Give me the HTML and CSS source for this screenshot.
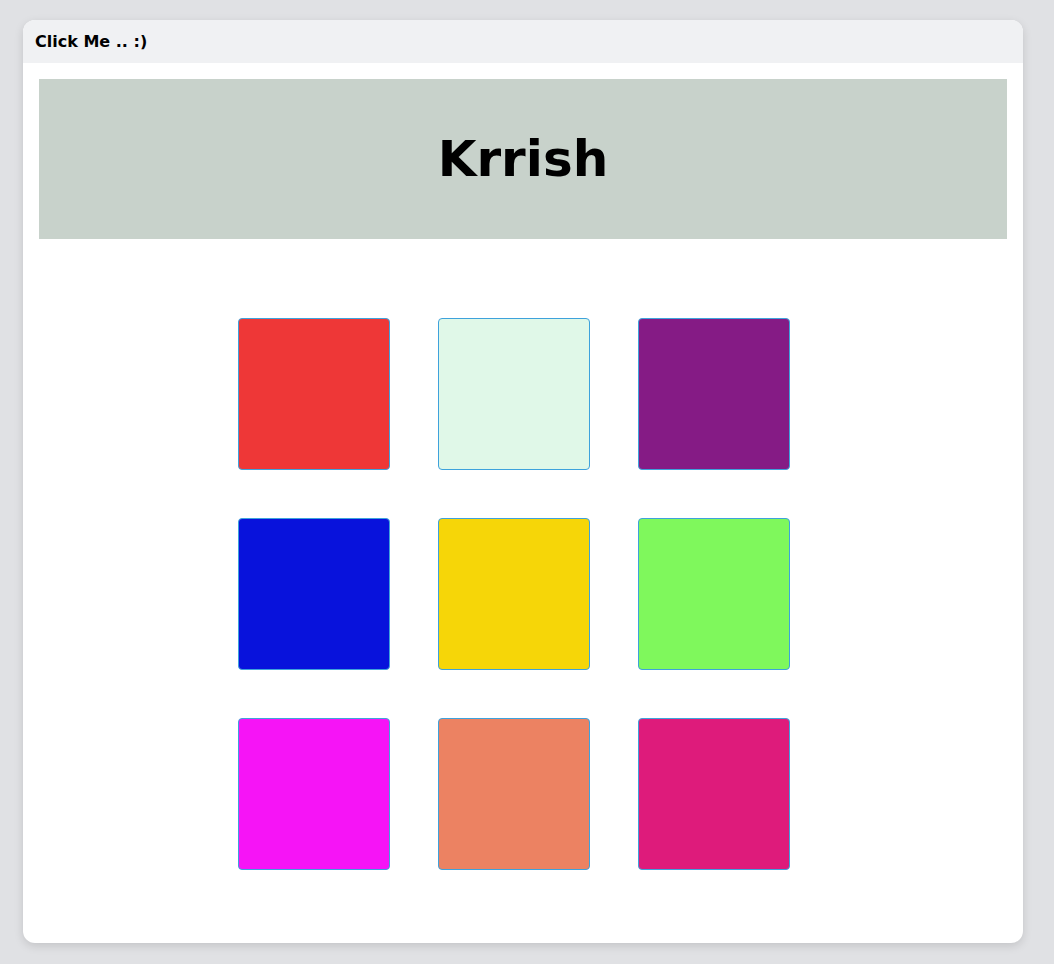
FILE: index.html
```html
<!DOCTYPE html>
<html>
<head>
<meta charset="utf-8">
<link rel="stylesheet" href="styles.css">
</head>
<body>
<div class="window">
  <div class="titlebar">Click Me .. :)</div>
  <div class="content">
    <div class="banner"><h1 class="name">Krrish</h1></div>
    <div class="grid">
      <div class="tile c1"></div>
      <div class="tile c2"></div>
      <div class="tile c3"></div>
      <div class="tile c4"></div>
      <div class="tile c5"></div>
      <div class="tile c6"></div>
      <div class="tile c7"></div>
      <div class="tile c8"></div>
      <div class="tile c9"></div>
    </div>
  </div>
</div>
</body>
</html>
```
FILE: styles.css
```css
html, body { margin: 0; padding: 0; }
body {
  background: #e0e1e4;
  font-family: "DejaVu Sans", sans-serif;
  padding: 20px 31px 21px 23px;
}
.window {
  width: 1000px;
  height: 923px;
  background: #ffffff;
  border-radius: 12px;
  overflow: hidden;
  box-shadow: 0 3px 10px rgba(0,0,0,0.13);
}
.titlebar {
  height: 43px;
  background: #f0f1f3;
  display: flex;
  align-items: center;
  padding-left: 12px;
  font-weight: bold;
  font-size: 16px;
  color: #000;
}
.content {
  padding: 16px;
}
.banner {
  height: 160px;
  background: #c8d2cb;
  display: flex;
  align-items: center;
  justify-content: center;
}
.name {
  margin: 0;
  font-size: 50px;
  font-weight: bold;
  color: #000;
}
.grid {
  display: grid;
  grid-template-columns: repeat(3, 152px);
  gap: 48px;
  margin: 79px 0 0 199px;
}
.tile {
  width: 150px;
  height: 150px;
  border: 1px solid #3ea2dc;
  border-radius: 4px;
}
.c1 { background: #ee3737; }
.c2 { background: #e0f8e8; }
.c3 { background: #851b85; }
.c4 { background: #0812dc; }
.c5 { background: #f6d608; }
.c6 { background: #7ff85c; }
.c7 { background: #f614f6; }
.c8 { background: #ec8262; }
.c9 { background: #de1b7b; }
```
